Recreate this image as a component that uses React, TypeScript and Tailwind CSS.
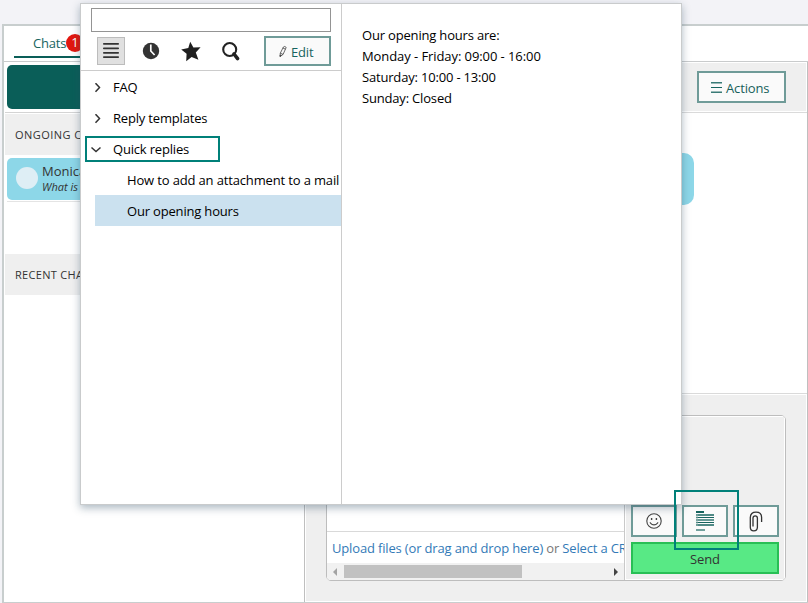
import React from "react";

function ListIcon() {
  return (
    <svg width="28" height="28" viewBox="0 0 28 28" className="block" fill="#333">
      <rect x="6" y="6" width="16" height="1.8" rx="0.8" />
      <rect x="6" y="10.5" width="16" height="1.8" rx="0.8" />
      <rect x="6" y="15" width="16" height="1.8" rx="0.8" />
      <rect x="6" y="19.2" width="16" height="1.8" rx="0.8" />
    </svg>
  );
}

function ClockIcon() {
  return (
    <svg width="28" height="28" viewBox="0 0 28 28" className="block">
      <circle cx="14" cy="13" r="8.2" fill="#333" />
      <path d="M13.8 6.5v6.5l3.8 4" fill="none" stroke="#fff" strokeWidth="1.7" />
    </svg>
  );
}

function StarIcon() {
  return (
    <svg width="28" height="28" viewBox="0 0 28 28" className="block">
      <path d="M13.2 3.8l3.2 5.7 7.2-.2-4.8 5.3 2.6 7.2-6.8-2.8-5.4 4.2.4-7.4-5.4-4.2 7.1-1.6z" fill="#1f1f1f" />
    </svg>
  );
}

function SearchIcon() {
  return (
    <svg width="28" height="28" viewBox="0 0 28 28" className="block">
      <circle cx="12.7" cy="11.5" r="6.5" fill="none" stroke="#222" strokeWidth="2.1" />
      <path d="M17 16l3.6 4.6" stroke="#222" strokeWidth="3.6" strokeLinecap="round" />
    </svg>
  );
}

function PencilIcon() {
  return (
    <svg width="8" height="13" viewBox="0 0 8 13" className="block" fill="none" stroke="#444" strokeWidth="0.8">
      <path d="M1 11.5l.3-3.3L4.4 2q1.2-1.3 2.8.4L4.1 9.4z" />
      <path d="M1.3 8.2l2.8 1.2M3.9 3l2.6 1.2" />
      <path d="M1 11.5l.2-1.5 1 .6z" fill="#444" />
    </svg>
  );
}

function Chevron({ open }: { open?: boolean }) {
  return (
    <svg width="10" height="10" viewBox="0 0 10 10" className="block" fill="none" stroke="#333" strokeWidth="1.5">
      <path d={open ? "M.5 2.5l4.5 4L9.5 2.5" : "M2.5 .2l4 4.3-4 4.3"} />
    </svg>
  );
}

function SmileIcon() {
  return (
    <svg width="16" height="16" viewBox="0 0 16 16" className="block" fill="none" stroke="#444" strokeWidth="1.1">
      <circle cx="8" cy="8" r="7.2" />
      <path d="M4.2 9.8q3.8 4.2 7.6 0M3.8 9.9l.9-.5M12.2 9.9l-.9-.5" />
      <rect x="4.9" y="5" width="1.4" height="2" fill="#444" stroke="none" />
      <rect x="9.7" y="5" width="1.4" height="2" fill="#444" stroke="none" />
    </svg>
  );
}

function TemplateIcon() {
  return (
    <svg width="18" height="20" viewBox="0 0 18 20" className="block" fill="#17645f">
      <rect width="8" height="2" />
      <rect y="3" width="18" height="2" opacity=".75" />
      <rect y="6" width="18" height="1" />
      <rect y="8" width="18" height="2" opacity=".65" />
      <rect y="11" width="18" height="1" />
      <rect y="13" width="18" height="2" opacity=".75" />
      <rect y="18" width="9" height="2" opacity=".6" />
      <rect y="3" width="2" height="12" fill="#8fb1ae" opacity=".5" />
    </svg>
  );
}

function ClipIcon() {
  return (
    <svg width="14" height="21" viewBox="0 0 14 21" className="block" fill="none" stroke="#333" strokeWidth="1.3">
      <path d="M4 15.5V7q.1-2.2 2.2-2.2T8.4 7v9.2q-.1 3.6-3.6 3.6t-3.5-3.6V6.5Q1.5 1.2 7 1.2t5.6 5.1V11" />
    </svg>
  );
}

function TreeRow({ label, open }: { label: string; open?: boolean }) {
  return (
    <div className="flex h-[31px] items-center pt-[2px]">
      <span className={open ? "ml-[10px] w-[22px]" : "ml-[12px] w-[20px]"}>
        <Chevron open={open} />
      </span>
      <span className="whitespace-nowrap">{label}</span>
    </div>
  );
}

function Sidebar() {
  return (
    <aside className="flex w-[301px] shrink-0 flex-col border-r border-[#bfbfbf]">
      <div className="mt-[3px] ml-[3px] h-[44px] rounded-[5px] bg-[#0a5e58]" />
      <div className="mt-[3px] ml-px h-px bg-[#d4d4d4]" />
      <h2 className="mt-px ml-px flex h-[41px] items-center bg-[#efefef] pt-[2px] pl-[10px] text-[11px] tracking-[0.45px] text-[#333]">ONGOING CHATS</h2>
      <div className="mt-[3px] ml-[3px] flex h-[42px] rounded-[5px] bg-[#8dd7e8]">
        <span className="mt-[9px] ml-[9px] size-[22px] rounded-full bg-[#deeef5]" />
        <div className="mt-[4px] ml-[4px] text-[#333]">
          <div className="text-[13px] leading-[19px]">Monica</div>
          <div className="text-[11px] leading-[12px] italic">What is the</div>
        </div>
      </div>
      <div className="mt-px ml-[3px] h-px bg-[#e4e4e4]" />
      <h2 className="mt-[52px] ml-px flex h-[41px] items-center bg-[#efefef] pt-px pl-[10px] text-[11px] tracking-[0.3px] text-[#333]">RECENT CHATS</h2>
    </aside>
  );
}

function Composer() {
  const tool = "flex h-[32px] w-[46px] items-center justify-center border-2 border-[#6f9b98] bg-[#fafafa]";
  return (
    <div className="mt-px mr-px mb-px ml-px flex flex-1 bg-[#efefef] pt-[20px] pl-[20px]">
      <div className="flex h-[166px] w-[460px] overflow-hidden rounded-[5px] border border-[#bdbdbd]">
        <div className="flex w-[298px] flex-col border-r border-[#c9c9c9] bg-white">
          <div className="h-[116px] border-b border-[#d9d9d9]" />
          <div className="h-[31px] overflow-hidden pl-[5px] text-[13px] leading-[33px] tracking-[-0.16px] whitespace-nowrap text-[#337ab7]">
            Upload files (or drag and drop here) <span className="text-[#777]">or</span> Select a CRM document
          </div>
          <div className="flex h-[17px] items-center bg-[#f1f1f1] px-[6px]">
            <span className="border-y-4 border-r-4 border-y-transparent border-r-[#a3a3a3]" />
            <span className="ml-[7px] h-[13px] w-[178px] bg-[#c1c1c1]" />
            <span className="ml-auto border-y-4 border-l-4 border-y-transparent border-l-[#444]" />
          </div>
        </div>
        <div className="flex flex-1 flex-col border border-white bg-[#efefef] pt-[88px] pl-[5px]">
          <div className="flex gap-[5px]">
            <button className={tool}><SmileIcon /></button>
            <button className={tool}><TemplateIcon /></button>
            <button className={tool}><ClipIcon /></button>
          </div>
          <button className="mt-[5px] h-[32px] w-[148px] border-2 border-[#28bf55] bg-[#58e985] pt-px text-[13px] leading-[28px] tracking-[-0.15px] text-[#333]">Send</button>
        </div>
      </div>
    </div>
  );
}

function Conversation() {
  return (
    <main className="flex flex-1 flex-col border-r border-[#bfbfbf]">
      <header className="mt-px mr-px flex h-[48px] items-start justify-end bg-[#efefef] pt-[8px] pr-[20px]">
        <button className="flex h-[32px] w-[89px] items-center border-2 border-[#6f9b98] bg-[#fafafa] pl-[12px] text-[13px] text-[#175f5a]">
          <svg width="11" height="11" viewBox="0 0 11 11" className="mr-[4px]" fill="#17645f">
            <rect width="11" height="1.5" opacity=".85" />
            <rect y="5" width="11" height="1" />
            <rect y="9.5" width="11" height="1.5" opacity=".85" />
          </svg>
          <span className="mt-[2px] leading-none tracking-[-0.15px]">Actions</span>
        </button>
      </header>
      <div className="mt-px h-px bg-[#dadada]" />
      <section className="flex h-[281px] items-start justify-end border-b border-[#dadada] pt-[40px] pr-[113px]">
        <div className="h-[52px] w-[200px] rounded-[10px] bg-[#8dd7e8]" />
      </section>
      <Composer />
    </main>
  );
}

function ReplyPicker() {
  return (
    <div className="absolute top-[3px] left-[80px] flex h-[502px] w-[602px] border border-[#c9cbcc] bg-white text-[13px] tracking-[-0.18px] text-black shadow-[0_3px_8px_rgba(40,70,95,0.38)]">
      <div className="w-[261px] shrink-0 border-r border-[#ccc]">
        <div className="h-[67px] border-b border-[#ccc] pt-[4px]">
          <input className="ml-[10px] block h-[24px] w-[240px] border border-[#949494] bg-white" />
          <div className="mt-[4px] flex pl-[16px]">
            <button className="mt-px mr-[12px] h-[28px] w-[28px] border border-[#bcbcbc] bg-[#e0e0e0]">
              <span className="-m-px block"><ListIcon /></span>
            </button>
            <button className="mt-px mr-[12px]"><ClockIcon /></button>
            <button className="mt-px mr-[12px]"><StarIcon /></button>
            <button className="mt-px mr-[19px]"><SearchIcon /></button>
            <button className="flex h-[30px] w-[67px] items-center border-2 border-[#6f9b98] bg-[#fafafa] pl-[13px] text-[#17645f]">
              <PencilIcon /><span className="mt-[3px] ml-[4px]">Edit</span>
            </button>
          </div>
        </div>
        <nav>
          <TreeRow label="FAQ" />
          <TreeRow label="Reply templates" />
          <TreeRow label="Quick replies" open />
          <div className="h-[31px] pt-[2px] pl-[46px] leading-[29px] tracking-[-0.15px] whitespace-nowrap">How to add an attachment to a mail</div>
          <div className="ml-[14px] h-[31px] bg-[#cbe1ef] pt-[2px] pl-[32px] leading-[29px]">Our opening hours</div>
        </nav>
      </div>
      <div className="pt-[21px] pl-[20px] leading-[21px]">
        <p>Our opening hours are:</p>
        <p className="tracking-[-0.08px]">Monday - Friday: 09:00 - 16:00</p>
        <p>Saturday: 10:00 - 13:00</p>
        <p>Sunday: Closed</p>
      </div>
    </div>
  );
}

export default function App() {
  return (
    <div className="relative h-[603px] w-[808px] overflow-hidden bg-[#f3f3f7] pt-[24px] pl-[2px] font-['Open_Sans','Noto_Sans',sans-serif]">
      <div className="flex h-[579px] flex-col border-t-2 border-b border-l-2 border-t-[#c8cece] border-b-[#c8cece] border-l-[#c8cece] bg-white">
        <div className="flex h-[36px] items-end border-b border-[#c9cbcc] pl-[10px]">
          <div className="mb-[3px] flex h-[32px] w-[100px] items-center border-b-2 border-[#0a5e58] pl-[19px] text-[13px] text-[#17645f]">
            <span className="mt-[5px] w-[33px] tracking-[-0.2px]">Chats</span>
            <span className="mt-[4px] flex size-[18px] items-center justify-center rounded-full bg-[#e2170f] text-white">1</span>
          </div>
        </div>
        <div className="flex min-h-0 flex-1">
          <Sidebar />
          <Conversation />
        </div>
      </div>
      <ReplyPicker />
      <div className="absolute top-[136px] left-[85px] h-[26px] w-[135px] border-2 border-[#008079]" />
      <div className="absolute top-[490px] left-[674px] h-[60px] w-[65px] border-2 border-[#008079]" />
    </div>
  );
}
